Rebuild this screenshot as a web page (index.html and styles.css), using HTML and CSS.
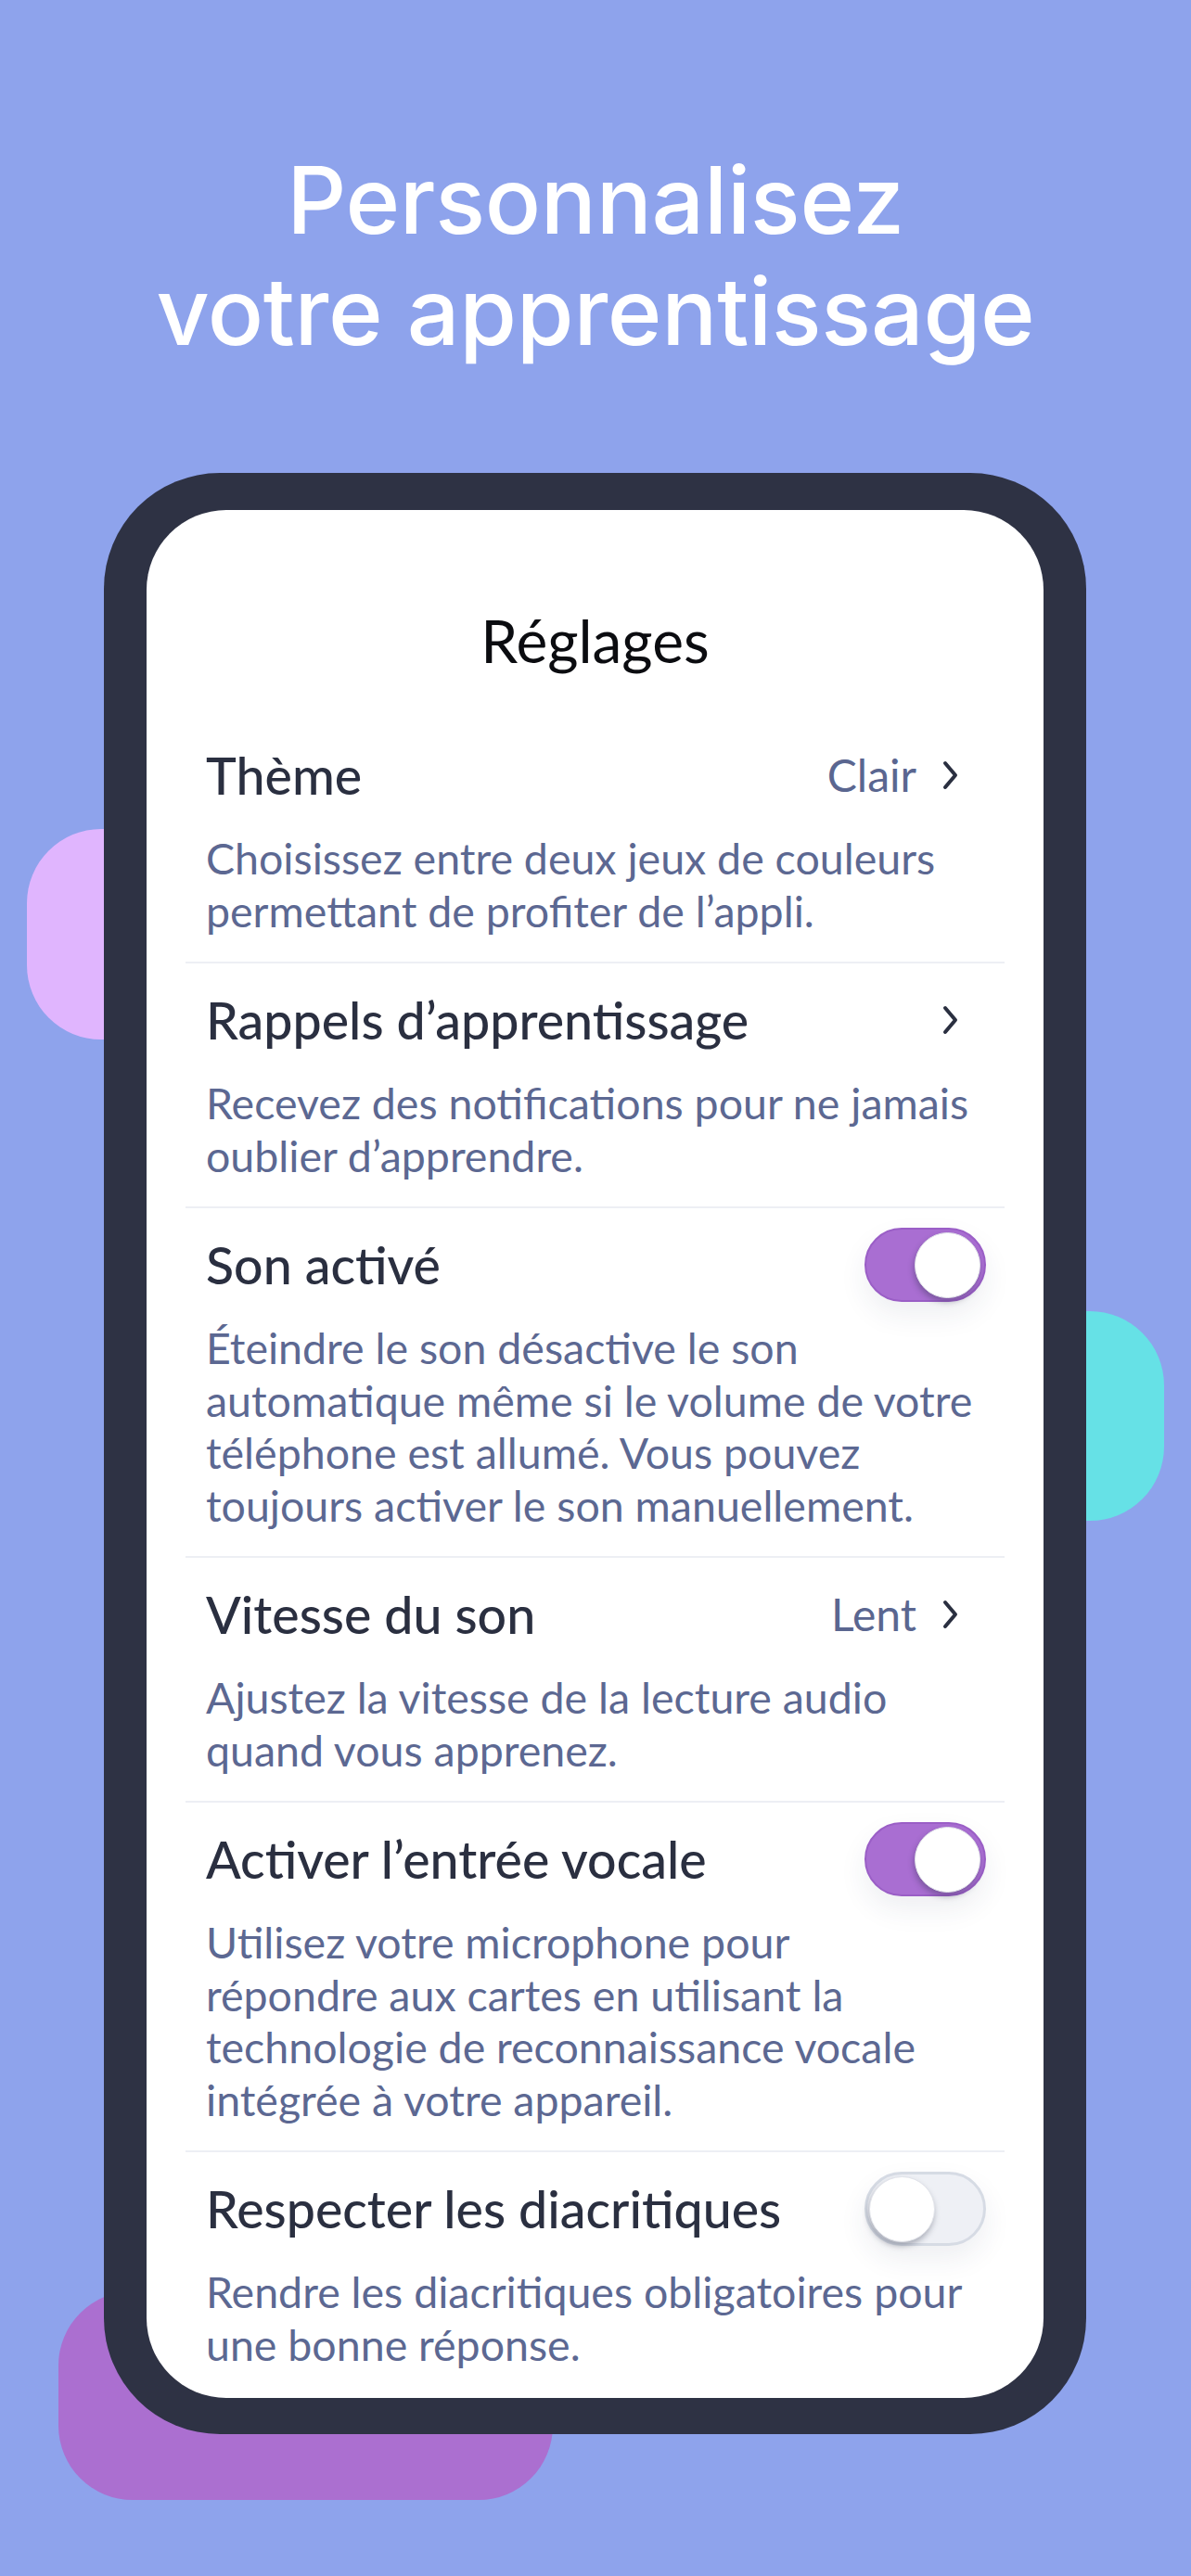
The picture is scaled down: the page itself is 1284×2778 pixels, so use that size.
FILE: index.html
```html
<!DOCTYPE html>
<html lang="fr">
<head>
<meta charset="utf-8">
<title>Réglages</title>
<link rel="stylesheet" href="styles.css">
</head>
<body>
<div class="page">
  <div class="blob blob-pink"></div>
  <div class="blob blob-cyan"></div>
  <div class="blob blob-purple"></div>

  <h1 class="headline">Personnalisez<br>votre apprentissage</h1>

  <div class="phone">
    <div class="screen">
      <h2 class="screen-title">Réglages</h2>
      <ul class="settings">
        <li class="setting">
          <div class="setting-head">
            <span class="setting-name">Thème</span>
            <span class="setting-value">Clair
              <svg class="chevron" viewBox="0 0 17 32"><polyline points="3,3 14,16 3,29"/></svg>
            </span>
          </div>
          <p class="setting-desc">Choisissez entre deux jeux de couleurs<br>permettant de profiter de l’appli.</p>
        </li>
        <li class="setting">
          <div class="setting-head">
            <span class="setting-name">Rappels d’apprentissage</span>
            <span class="setting-value">
              <svg class="chevron" viewBox="0 0 17 32"><polyline points="3,3 14,16 3,29"/></svg>
            </span>
          </div>
          <p class="setting-desc">Recevez des notifications pour ne jamais<br>oublier d’apprendre.</p>
        </li>
        <li class="setting">
          <div class="setting-head">
            <span class="setting-name">Son activé</span>
            <span class="toggle toggle-on"><span class="knob"></span></span>
          </div>
          <p class="setting-desc">Éteindre le son désactive le son<br>automatique même si le volume de votre<br>téléphone est allumé. Vous pouvez<br>toujours activer le son manuellement.</p>
        </li>
        <li class="setting">
          <div class="setting-head">
            <span class="setting-name">Vitesse du son</span>
            <span class="setting-value">Lent
              <svg class="chevron" viewBox="0 0 17 32"><polyline points="3,3 14,16 3,29"/></svg>
            </span>
          </div>
          <p class="setting-desc">Ajustez la vitesse de la lecture audio<br>quand vous apprenez.</p>
        </li>
        <li class="setting">
          <div class="setting-head">
            <span class="setting-name">Activer l’entrée vocale</span>
            <span class="toggle toggle-on"><span class="knob"></span></span>
          </div>
          <p class="setting-desc">Utilisez votre microphone pour<br>répondre aux cartes en utilisant la<br>technologie de reconnaissance vocale<br>intégrée à votre appareil.</p>
        </li>
        <li class="setting">
          <div class="setting-head">
            <span class="setting-name">Respecter les diacritiques</span>
            <span class="toggle toggle-off"><span class="knob"></span></span>
          </div>
          <p class="setting-desc">Rendre les diacritiques obligatoires pour<br>une bonne réponse.</p>
        </li>
      </ul>
    </div>
  </div>
</div>
</body>
</html>
```

FILE: styles.css
```css
html, body {
  margin: 0;
  padding: 0;
  background: #8EA3EC;
}

.page {
  position: relative;
  width: 1284px;
  height: 2778px;
  overflow: hidden;
  background: #8EA3EC;
}

.blob {
  position: absolute;
  z-index: 0;
  border-radius: 80px;
}

.blob-pink {
  left: 29px;
  top: 894px;
  width: 200px;
  height: 227px;
  background: #E0B5FE;
}

.blob-cyan {
  left: 1055px;
  top: 1414px;
  width: 200px;
  height: 226px;
  background: #66E1E6;
}

.blob-purple {
  left: 63px;
  top: 2471px;
  width: 533px;
  height: 225px;
  background: #AB6FD0;
}

.headline {
  position: relative;
  z-index: 1;
  margin: 0;
  padding-top: 156px;
  font-family: Inter, "Liberation Sans", sans-serif;
  font-weight: 500;
  font-size: 100px;
  line-height: 120px;
  color: #ffffff;
  text-align: center;
  letter-spacing: -0.3px;
}

.phone {
  position: relative;
  z-index: 1;
  box-sizing: border-box;
  width: 1059px;
  height: 2115px;
  margin: 114px 0 0 112px;
  padding: 40px 46px 39px;
  background: #2E3244;
  border-radius: 125px;
}

.screen {
  box-sizing: border-box;
  height: 100%;
  padding-top: 101px;
  background: #ffffff;
  border-radius: 86px;
  overflow: hidden;
}

.screen-title {
  margin: 0 0 44px;
  text-align: center;
  font-family: Lato, "Noto Sans", sans-serif;
  font-weight: 400;
  font-size: 64px;
  line-height: 80px;
  color: #0b0c10;
}

.settings {
  list-style: none;
  margin: 0 42px;
  padding: 0;
}

.setting {
  padding: 29px 20px 27px 22px;
  border-bottom: 2px solid #EDEFF4;
}

.setting:last-child {
  border-bottom: 0;
}

.setting-head {
  display: flex;
  align-items: center;
  justify-content: space-between;
  height: 64px;
}

.setting-name {
  font-family: Lato, "Noto Sans", sans-serif;
  font-weight: 500;
  font-size: 55.5px;
  line-height: 64px;
  color: #2A2F40;
  white-space: nowrap;
}

.setting-value {
  display: flex;
  align-items: center;
  gap: 28px;
  margin-right: 30px;
  font-family: Lato, "Noto Sans", sans-serif;
  font-weight: 400;
  font-size: 48px;
  line-height: 64px;
  color: #5A6690;
}

.chevron {
  width: 17px;
  height: 32px;
  fill: none;
  stroke: #2A2F40;
  stroke-width: 4;
  stroke-linecap: round;
  stroke-linejoin: round;
}

.setting-desc {
  margin: 29px 0 0;
  font-family: Lato, "Noto Sans", sans-serif;
  font-weight: 400;
  font-size: 46.5px;
  line-height: 56.5px;
  color: #5C6892;
  white-space: nowrap;
}

.toggle {
  box-sizing: border-box;
  display: flex;
  align-items: center;
  flex: none;
  width: 131px;
  height: 80px;
  border-radius: 40px;
  box-shadow: 0 14px 30px rgba(40, 50, 90, 0.08);
}

.toggle-on {
  justify-content: flex-end;
  padding: 0 4px;
  background: #A96ED2;
  border: 2px solid #9A5EC6;
}

.toggle-off {
  justify-content: flex-start;
  padding: 0 2px;
  background: #EEF0F5;
  border: 3px solid #D6DBE4;
}

.knob {
  box-sizing: border-box;
  width: 71px;
  height: 71px;
  border-radius: 50%;
  background: #ffffff;
  border: 1px solid #e2e4ea;
  box-shadow: -1px 4px 6px rgba(40, 45, 70, 0.35);
}
```
